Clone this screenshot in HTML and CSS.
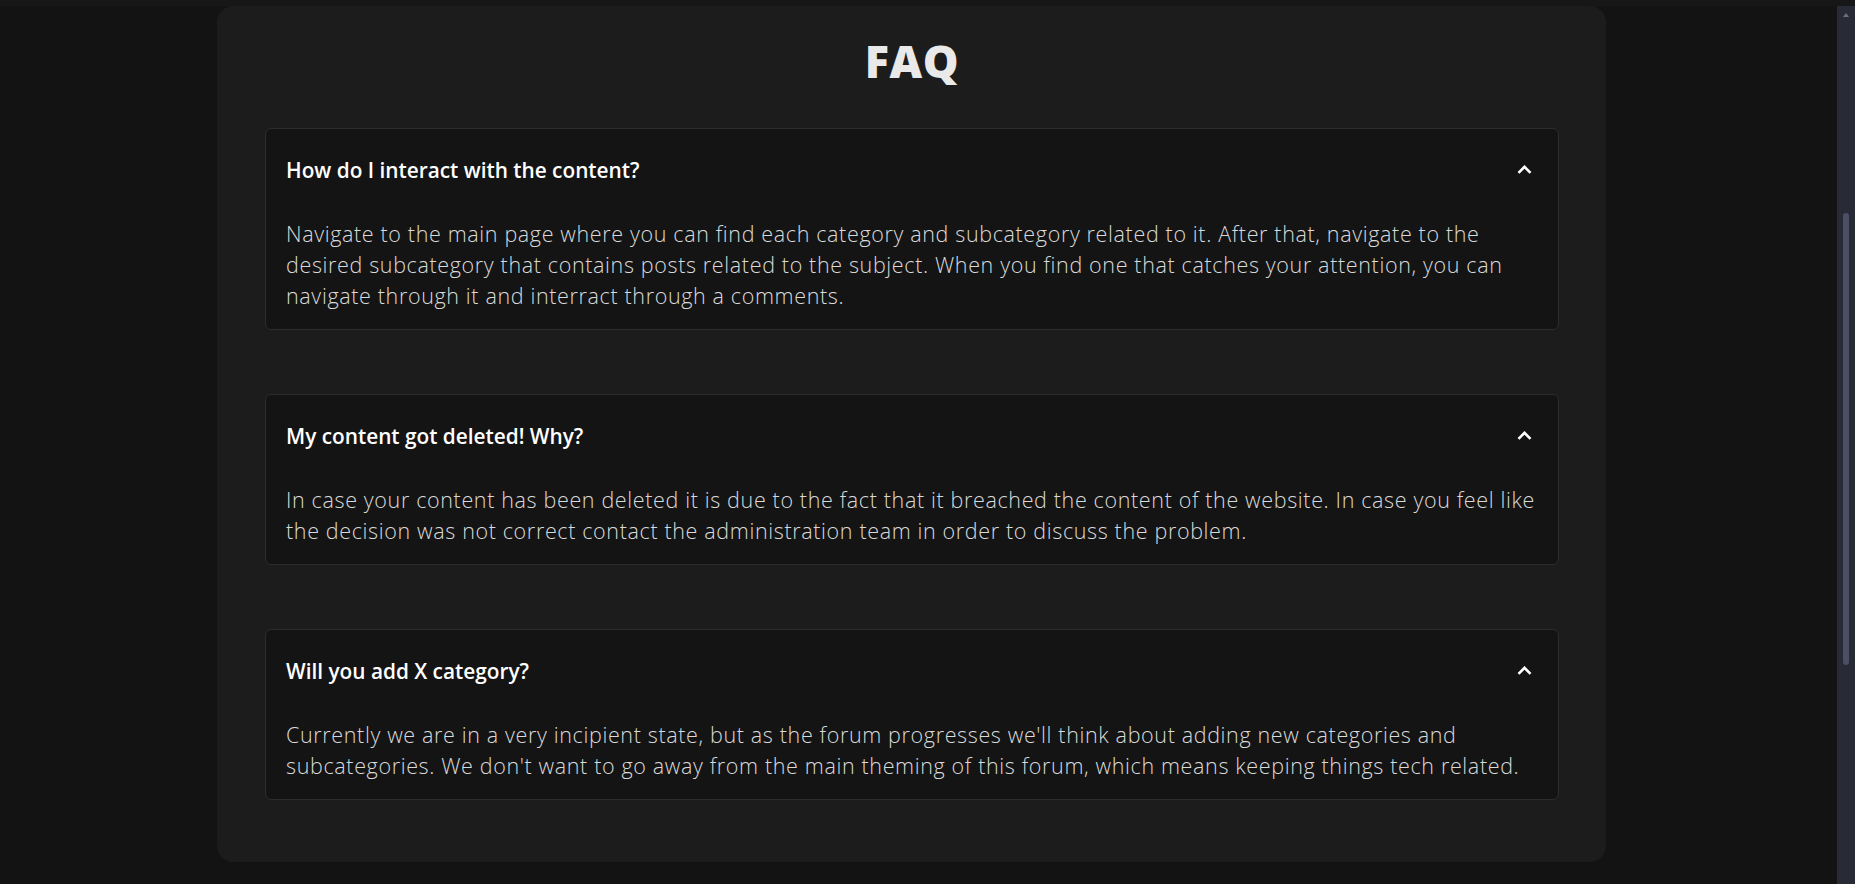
FILE: index.html
```html
<!DOCTYPE html>
<html lang="en">
<head>
<meta charset="utf-8">
<title>FAQ</title>
<link rel="stylesheet" href="styles.css">
</head>
<body>
<div class="topband"></div>
<div class="viewport">
  <main class="main">
    <section class="card">
      <h1 class="title">FAQ</h1>
      <div class="faq-list">
        <div class="faq-item">
          <div class="faq-head">
            <span class="faq-q">How do I interact with the content?</span>
            <svg class="chev" width="15" height="9" viewBox="0 0 15 9"><polyline points="1.5,7.8 7.5,1.8 13.5,7.8" fill="none" stroke="#fff" stroke-width="2.6"/></svg>
          </div>
          <div class="faq-body">Navigate to the main page where you can find each category and subcategory related to it. After that, navigate to the desired subcategory that contains posts related to the subject. When you find one that catches your attention, you can navigate through it and interract through a comments.</div>
        </div>
        <div class="faq-item">
          <div class="faq-head">
            <span class="faq-q">My content got deleted! Why?</span>
            <svg class="chev" width="15" height="9" viewBox="0 0 15 9"><polyline points="1.5,7.8 7.5,1.8 13.5,7.8" fill="none" stroke="#fff" stroke-width="2.6"/></svg>
          </div>
          <div class="faq-body">In case your content has been deleted it is due to the fact that it breached the content of the website. In case you feel like the decision was not correct contact the administration team in order to discuss the problem.</div>
        </div>
        <div class="faq-item">
          <div class="faq-head">
            <span class="faq-q">Will you add X category?</span>
            <svg class="chev" width="15" height="9" viewBox="0 0 15 9"><polyline points="1.5,7.8 7.5,1.8 13.5,7.8" fill="none" stroke="#fff" stroke-width="2.6"/></svg>
          </div>
          <div class="faq-body">Currently we are in a very incipient state, but as the forum progresses we'll think about adding new categories and subcategories. We don't want to go away from the main theming of this forum, which means keeping things tech related.</div>
        </div>
      </div>
    </section>
  </main>
  <aside class="scrollbar">
    <div class="sb-arrow"></div>
    <div class="sb-thumb"></div>
  </aside>
</div>
</body>
</html>
```
FILE: styles.css
```css
* { box-sizing: border-box; }
html, body { margin: 0; padding: 0; height: 100%; overflow: hidden; }
body {
  background: #131313;
  font-family: "Open Sans", "Liberation Sans", sans-serif;
  color: #d2d2d2;
  display: flex;
  flex-direction: column;
}
.topband { height: 6px; background: #171717; flex: none; }
.viewport { flex: 1; display: flex; min-height: 0; }
.main {
  flex: 1;
  display: flex;
  justify-content: center;
  align-items: flex-start;
  padding-right: 14px;
}
.card {
  width: 1389px;
  background: #1c1c1c;
  border-radius: 16px;
  padding: 28px 47px 62px 48px;
}
.title {
  margin: 0;
  text-align: center;
  font-size: 45px;
  line-height: 54px;
  font-weight: 800;
  color: #e9e9e9;
  letter-spacing: 0.5px;
}
.faq-list {
  margin-top: 40px;
  display: flex;
  flex-direction: column;
  gap: 64px;
}
.faq-item {
  background: #141414;
  border: 1px solid #2c2c2c;
  border-radius: 6px;
}
.faq-head {
  height: 81px;
  display: flex;
  align-items: center;
  justify-content: space-between;
  padding: 0 26px 0 20px;
}
.faq-q {
  color: #ffffff;
  font-weight: 600;
  font-size: 20.8px;
}
.chev { display: block; margin-top: -1px; }
.faq-body {
  padding: 8px 20px 18px 20px;
  font-size: 21.5px;
  line-height: 31px;
  font-weight: 300;
  letter-spacing: 0.64px;
  color: #dadada;
}
.scrollbar {
  width: 18px;
  flex: none;
  background: #282a36;
  position: relative;
}
.sb-arrow {
  position: absolute;
  left: 6px;
  top: 7px;
  width: 0;
  height: 0;
  border-left: 3.5px solid transparent;
  border-right: 3.5px solid transparent;
  border-bottom: 4px solid #6c6f7c;
}
.sb-thumb {
  position: absolute;
  left: 6px;
  top: 207px;
  width: 6px;
  height: 452px;
  border-radius: 3px;
  background: #4b4e65;
}
```
